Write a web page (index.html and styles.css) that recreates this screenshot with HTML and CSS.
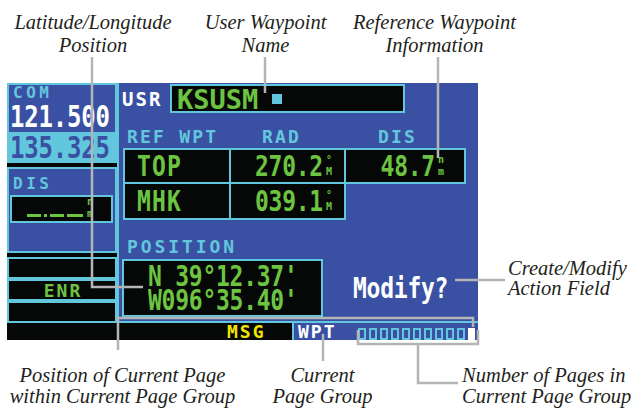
FILE: index.html
```html
<!DOCTYPE html>
<html lang="en">
<head>
<meta charset="utf-8">
<title>User Waypoint Page</title>
<link rel="stylesheet" href="styles.css">
</head>
<body>
<div class="page">
  <div class="top-labels">
    <div class="lbl">Latitude/Longitude<br>Position</div>
    <div class="lbl">User Waypoint<br>Name</div>
    <div class="lbl">Reference Waypoint<br>Information</div>
  </div>

  <div class="mid-row">
    <div class="screen">
      <div class="screen-body">
        <div class="left-col">
          <div class="com-box">
            <div class="com-label">COM</div>
            <div class="freq-active"><span class="big">121.500</span></div>
            <div class="freq-standby"><span class="big">135.325</span></div>
          </div>
          <div class="sep"></div>
          <div class="dis-box">
            <div class="dis-label">DIS</div>
            <div class="dis-field">
              <div class="dashes"><i class="dash-a"></i><i class="dash-dot"></i><i class="dash-b"></i><i class="dash-c"></i></div>
              <div class="unit unit-tall"><span>n</span><span>m</span></div>
            </div>
          </div>
          <div class="sep"></div>
          <div class="mode-box"></div>
          <div class="mode-box"><span class="enr">ENR</span></div>
          <div class="mode-box"></div>
        </div>

        <div class="main">
          <div class="wpt-row">
            <span class="usr">USR</span>
            <div class="ident-box"><span class="ident">KSUSM</span><span class="cursor"></span></div>
          </div>
          <div class="col-heads">
            <span class="h-ref">REF WPT</span><span class="h-rad">RAD</span><span class="h-dis">DIS</span>
          </div>
          <table class="ref-table">
            <colgroup><col class="c1"><col class="c2"><col class="c3"></colgroup>
            <tr class="r1">
              <td class="name"><span class="big">TOP</span></td>
              <td class="num"><span class="big">270.2</span><span class="unit"><span>°</span><span>M</span></span></td>
              <td class="num dist"><span class="big">48.7</span><span class="unit"><span>n</span><span>m</span></span></td>
            </tr>
            <tr class="r2">
              <td class="name"><span class="big">MHK</span></td>
              <td class="num"><span class="big">039.1</span><span class="unit"><span>°</span><span>M</span></span></td>
              <td class="empty"></td>
            </tr>
          </table>
          <div class="pos-head">POSITION</div>
          <div class="pos-row">
            <div class="pos-box">
              <div class="pos-line"><span class="big">N 39°12.37'</span></div>
              <div class="pos-line"><span class="big">W096°35.40'</span></div>
            </div>
            <div class="modify"><span class="big">Modify?</span></div>
          </div>
        </div>
      </div>

      <div class="status-bar">
        <div class="status-left"><span class="msg">MSG</span></div>
        <div class="status-right">
          <span class="grp">WPT</span>
          <div class="pages">
            <i></i><i></i><i></i><i></i><i></i><i></i><i></i><i></i><i></i><i></i><b></b>
          </div>
        </div>
      </div>
    </div>
    <div class="lbl lbl-right">Create/Modify<br>Action Field</div>
  </div>

  <div class="bottom-labels">
    <div class="lbl bl-center">Position of Current Page<br>within Current Page Group</div>
    <div class="lbl bl-center">Current<br>Page Group</div>
    <div class="lbl bl-left">Number of Pages in<br>Current Page Group</div>
  </div>

  <svg class="callouts" width="634" height="412" viewBox="0 0 634 412" aria-hidden="true">
    <g fill="none" stroke="#b5b5b8" stroke-width="2.5">
      <path d="M92 57V287H143"/>
      <path d="M265 57V93"/>
      <path d="M438 57V158"/>
      <path d="M455 280H505"/>
      <path d="M118 350V318H473V327"/>
      <path d="M323 334V361"/>
      <path d="M358 330V344H478V330M418 344V383H458"/>
    </g>
  </svg>
</div>
</body>
</html>
```

FILE: styles.css
```css
* { box-sizing: border-box; margin: 0; padding: 0; }
body { margin: 0; background: #ffffff; }

.page {
  position: relative;
  width: 634px;
  height: 412px;
  overflow: hidden;
  background: #ffffff;
  font-family: "Liberation Serif", serif;
}

/* ---------- callout labels ---------- */
.lbl {
  font-style: italic;
  font-size: 20.5px;
  color: #231f20;
  white-space: nowrap;
}
.top-labels {
  display: grid;
  grid-template-columns: 186px 159px 179px;
  height: 83px;
  padding-top: 11px;
  line-height: 23px;
  text-align: center;
}
.mid-row {
  display: flex;
  height: 257px;
  padding-left: 7px;
}
.lbl-right {
  margin-left: 30px;
  margin-top: 175px;
  line-height: 20px;
}
.bottom-labels {
  display: grid;
  grid-template-columns: 245px 155px auto;
  padding-top: 25px;
  line-height: 21px;
}
.bl-center { text-align: center; }
.bl-left { padding-left: 62px; }

.callouts {
  position: absolute;
  left: 0;
  top: 0;
  pointer-events: none;
}

/* ---------- GPS screen ---------- */
.screen {
  width: 471px;
  height: 257px;
  display: flex;
  flex-direction: column;
  font-family: "DejaVu Sans Mono", monospace;
  font-weight: bold;
}
.screen-body {
  display: flex;
  height: 240px;
}
.big {
  display: inline-block;
  font-size: 23px;
  line-height: 19px;
  letter-spacing: -0.25px;
  transform: scaleY(1.2);
  white-space: pre;
  vertical-align: middle;
}

/* left column */
.left-col {
  width: 110px;
  background: #060808;
  display: flex;
  flex-direction: column;
}
.com-box {
  height: 80px;
  background: #3a51a3;
  border: 2px solid #62c7dd;
  border-bottom: 0;
  display: flex;
  flex-direction: column;
}
.com-label {
  margin-top: 1px;
  padding-left: 4px;
  height: 14px;
  font-size: 16px;
  line-height: 14px;
  letter-spacing: 3.5px;
  color: #62c7dd;
}
.freq-active {
  margin-top: 5px;
  height: 24px;
  display: flex;
  align-items: center;
  padding-left: 1px;
  color: #ffffff;
}
.freq-active .big, .freq-standby .big {
  font-size: 24px;
  letter-spacing: -0.2px;
  line-height: 19px;
  transform: scaleY(1.22);
}
.freq-standby {
  flex: 1;
  margin: 3px -2px 0;
  padding: 6px 0 0 3px;
  background: #62c7dd;
  color: #3a51a3;
}
.sep { height: 4px; flex: none; }
.dis-box {
  height: 86px;
  background: #3a51a3;
  border: 2px solid #62c7dd;
  display: flex;
  flex-direction: column;
}
.dis-label {
  margin-top: 8px;
  padding-left: 4px;
  height: 14px;
  font-size: 16px;
  line-height: 14px;
  letter-spacing: 3.5px;
  color: #62c7dd;
}
.dis-field {
  margin: 4px 2px 0 1px;
  height: 28px;
  background: #060808;
  border: 2px solid #62c7dd;
  display: flex;
  align-items: flex-end;
  justify-content: flex-end;
  padding: 0 18px 1px 0;
  gap: 3px;
}
.dashes {
  display: flex;
  gap: 3px;
  margin-bottom: 3px;
}
.dashes i { display: block; height: 3px; background: #6cc441; }
.dash-a { width: 14px; }
.dash-dot { width: 3px; }
.dash-b { width: 14px; }
.dash-c { width: 16px; }

.unit {
  display: inline-flex;
  flex-direction: column;
  vertical-align: middle;
  font-size: 10px;
  line-height: 12px;
  text-align: center;
  margin-left: 3px;
}
.unit-tall { color: #6cc441; margin-left: 1px; }

.mode-box {
  height: 22px;
  border: 2px solid #62c7dd;
  display: flex;
  align-items: center;
  justify-content: center;
}
.enr {
  font-size: 18px;
  letter-spacing: 2px;
  color: #6cc441;
  padding-left: 2px;
}

/* main panel */
.main {
  width: 361px;
  background: #3a51a3;
  border-left: 2px solid #62c7dd;
  border-bottom: 2px solid #62c7dd;
  padding-left: 3px;
  display: flex;
  flex-direction: column;
}
.wpt-row {
  margin-top: 1px;
  height: 29px;
  display: flex;
  align-items: center;
}
.usr {
  width: 48px;
  font-size: 19px;
  letter-spacing: 2px;
  color: #ffffff;
}
.ident-box {
  width: 235px;
  height: 29px;
  background: #060808;
  border: 2px solid #62c7dd;
  display: flex;
  align-items: center;
  padding-left: 5px;
}
.ident {
  font-size: 27px;
  line-height: 22px;
  color: #6cc441;
  margin-top: 3px;
}
.cursor {
  width: 10px;
  height: 10px;
  margin-left: 14px;
  background: #62c7dd;
}
.col-heads {
  margin-top: 13px;
  height: 20px;
  display: grid;
  grid-template-columns: 106px 115px 120px;
  align-items: center;
  font-size: 18px;
  letter-spacing: 2.2px;
  color: #62c7dd;
}
.h-ref { padding-left: 5px; }
.h-rad { padding-left: 34px; }
.h-dis { padding-left: 35px; }

.ref-table {
  margin: 2px 0 0 1px;
  width: 341px;
  border-collapse: collapse;
  table-layout: fixed;
  color: #6cc441;
}
.c1 { width: 106px; }
.c2 { width: 115px; }
.c3 { width: 120px; }
.ref-table td {
  border: 2px solid #62c7dd;
  background: #060808;
  vertical-align: middle;
  white-space: nowrap;
  font-size: 0;
}
.r1 td { height: 34px; }
.r2 td { height: 36px; }
.ref-table td.empty {
  border: 0 none;
  background: transparent;
}
.name { padding-left: 12px; }
.name .big { letter-spacing: 1.2px; }
.num { text-align: right; padding-right: 12px; }
.num.dist { padding-right: 20px; }
.num .unit { font-size: 10px; }

.pos-head {
  margin-top: 17px;
  height: 20px;
  line-height: 20px;
  padding-left: 5px;
  font-size: 18px;
  letter-spacing: 2.9px;
  color: #62c7dd;
}
.pos-row {
  margin-top: 2px;
  display: flex;
  align-items: center;
}
.pos-box {
  width: 201px;
  height: 58px;
  background: #060808;
  border: 2px solid #62c7dd;
  padding-left: 24px;
  display: flex;
  flex-direction: column;
  justify-content: center;
  color: #6cc441;
}
.pos-line { height: 24px; display: flex; align-items: center; }
.modify {
  margin-left: 30px;
  color: #ffffff;
}

/* status bar */
.status-bar {
  height: 17px;
  display: flex;
}
.status-left {
  width: 285px;
  background: #060808;
  padding-left: 220px;
  display: flex;
  align-items: center;
}
.msg {
  font-size: 18px;
  letter-spacing: 2px;
  color: #f2e600;
}
.status-right {
  flex: 1;
  background: #3a51a3;
  border-left: 2px solid #62c7dd;
  display: flex;
  align-items: center;
  padding-left: 4px;
}
.grp {
  font-size: 18px;
  letter-spacing: 2px;
  color: #ffffff;
}
.pages {
  margin-left: 21px;
  align-self: flex-end;
  display: flex;
  gap: 3px;
  height: 12px;
}
.pages i {
  display: block;
  width: 8px;
  height: 12px;
  border: 2px solid #62c7dd;
}
.pages b {
  display: block;
  width: 7px;
  height: 12px;
  background: #ffffff;
}
```
